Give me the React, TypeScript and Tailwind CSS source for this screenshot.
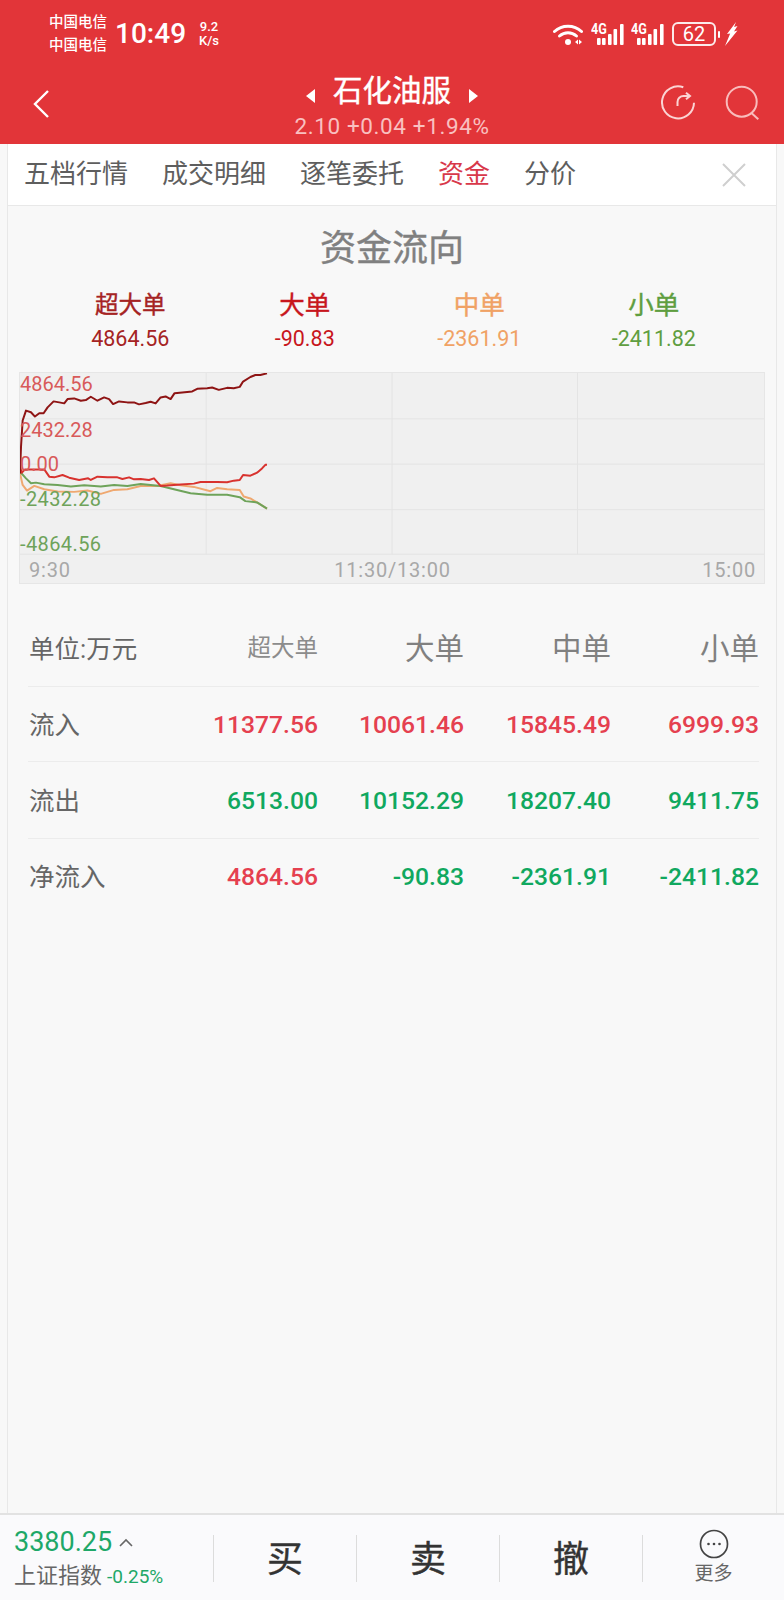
import React from 'react';

const FONT = 'font-["Roboto","Noto_Sans_CJK_SC",sans-serif]';
const SEMI = '[-webkit-text-stroke:0.4px_currentColor]';

const legend = [
  { name: '超大单', value: '4864.56', color: 'text-[#a52323]', size: 'text-[23.5px]' },
  { name: '大单', value: '-90.83', color: 'text-[#c8161d]', size: 'text-[25.5px]' },
  { name: '中单', value: '-2361.91', color: 'text-[#f0a265]', size: 'text-[25.5px]' },
  { name: '小单', value: '-2411.82', color: 'text-[#5f9e40]', size: 'text-[25.5px]' },
];

const rows = [
  { label: '流入', height: 'h-[75px]', cells: ['11377.56', '10061.46', '15845.49', '6999.93'], colors: ['r', 'r', 'r', 'r'] },
  { label: '流出', height: 'h-[77px]', cells: ['6513.00', '10152.29', '18207.40', '9411.75'], colors: ['g', 'g', 'g', 'g'] },
  { label: '净流入', height: 'h-[74px]', cells: ['4864.56', '-90.83', '-2361.91', '-2411.82'], colors: ['r', 'g', 'g', 'g'] },
];

const darkRed = '57,340 60,260 65,180 75,150 90,155 102,168 115,158 128,158 140,140 158,122 175,125 190,128 200,115 220,113 240,120 255,118 270,108 290,120 310,110 325,115 337,130 355,122 380,125 400,125 415,131 435,127 450,123 465,128 480,110 495,107 510,115 522,97 545,95 575,92 590,84 620,82 635,80 655,87 680,81 700,82 718,78 728,62 750,48 765,42 780,42 800,37';
const red = '57,320 62,338 72,328 130,328 145,350 160,352 185,345 205,353 235,360 262,355 270,360 290,350 320,352 350,352 365,357 385,352 400,358 420,357 445,360 460,355 480,378 500,377 540,374 580,371 600,366 650,366 680,367 700,362 718,360 728,345 750,347 770,338 785,325 795,314 800,314';
const orange = '57,340 65,375 78,392 100,378 130,388 170,395 220,396 260,392 300,402 340,390 380,388 420,378 470,378 510,370 540,376 580,381 630,394 650,384 680,388 718,390 730,410 750,416 770,428 800,447';
const green = '57,335 75,355 90,370 105,368 130,373 170,375 210,380 250,376 300,380 340,375 380,378 420,372 480,378 520,388 570,400 620,405 680,405 718,412 735,424 770,428 800,447';

const Signal = () => (
  <div className="relative w-[33px] h-[23px]">
    <span className="absolute left-0 top-[-1px] text-[14px] leading-[14px] font-bold text-white scale-x-90 origin-left">4G</span>
    <svg width="33" height="23" viewBox="0 0 33 23" fill="#fff">
      <rect x="6" y="15" width="3.6" height="7" rx="1" />
      <rect x="11" y="15" width="3.6" height="7" rx="1" />
      <rect x="17" y="11" width="3.6" height="11" rx="1" />
      <rect x="22.5" y="6" width="3.6" height="16" rx="1" />
      <rect x="29" y="1" width="3.6" height="21" rx="1" />
    </svg>
  </div>
);

const StatusBar = () => (
  <div className="h-[68px] flex items-center pl-[49px] pr-[46px] text-white">
    <div className="flex flex-col text-[14.5px] leading-[23px] font-medium w-[66px]">
      <span>中国电信</span>
      <span>中国电信</span>
    </div>
    <span className="text-[28px] leading-none font-medium">10:49</span>
    <div className="ml-[13px] flex flex-col items-center text-[13px] leading-[14px] font-medium">
      <span>9.2</span>
      <span>K/s</span>
    </div>
    <div className="ml-auto flex items-center">
      <svg width="30" height="23" viewBox="0 0 30 23" fill="none" stroke="#fff" strokeWidth="3" strokeLinecap="round">
        <path d="M1.5 8.5C9 1.5 21 1.5 28.5 8.5" />
        <path d="M6.5 13C11.5 8.5 18.5 8.5 23.5 13" />
        <circle cx="15" cy="19" r="3" fill="#fff" stroke="none" />
        <path d="M22 19l3-2.5v5zM26 16.5l3 2.5-3 2.5z" fill="#fff" stroke="none" />
      </svg>
      <div className="ml-[8px]"><Signal /></div>
      <div className="ml-[7px]"><Signal /></div>
      <div className="ml-[8px] w-[44px] h-[24px] border-2 border-white/90 rounded-[6px] flex items-center justify-center text-[20px] leading-none">62</div>
      <div className="ml-[2px] w-[2px] h-[7px] bg-white rounded-full" />
      <svg className="ml-[5px]" width="13" height="24" viewBox="0 0 13 24" fill="#fff">
        <path d="M11 0L2 12l3.2-.6L0 24 12.5 8.5 9 9.5l3.5-5.5-3.4 1z" />
      </svg>
    </div>
  </div>
);

const NavBar = () => (
  <div className="relative h-[76px] text-white">
    <svg className="absolute left-[32px] top-[21px]" width="18" height="30" viewBox="0 0 18 30" fill="none" stroke="#fff" strokeWidth="2.4">
      <path d="M16 2L3 15l13 13" />
    </svg>
    <div className="flex flex-col items-center">
      <div className="flex items-center h-[48px]">
        <span className="w-0 h-0 mt-[8px] border-y-[7px] border-y-transparent border-r-[9px] border-r-white" />
        <span className={`mx-[18px] text-[29.5px] leading-none ${SEMI}`}>石化油服</span>
        <span className="w-0 h-0 mt-[8px] border-y-[7px] border-y-transparent border-l-[9px] border-l-white" />
      </div>
      <span className="text-[22.5px] leading-[20px] tracking-[0.6px] text-[#f9c0c0]">2.10 +0.04 +1.94%</span>
    </div>
    <svg className="absolute left-[660px] top-[17px]" width="36" height="36" viewBox="0 0 36 36" fill="none" stroke="#fbd4d4" strokeWidth="2">
      <path d="M23.3 2.3A16 16 0 1 0 34 17.7" />
      <path d="M17.5 21v-4a6 6 0 0 1 6-6h6" />
      <path d="M26 7.7l4 3.3-4 3.3" />
    </svg>
    <svg className="absolute left-[725px] top-[17px]" width="36" height="36" viewBox="0 0 36 36" fill="none" stroke="#f9bcbc" strokeWidth="2">
      <circle cx="16.7" cy="16.7" r="15" />
      <path d="M26.7 28.3l6.6 6" />
    </svg>
  </div>
);

const Tabs = () => (
  <div className="h-[62px] bg-white border-b border-[#e8e8e8] flex items-center pl-[16px] pr-[30px] text-[26px] text-[#5e5e5e] gap-[34px]">
    <span>五档行情</span>
    <span>成交明细</span>
    <span>逐笔委托</span>
    <span className="text-[#d8384a]">资金</span>
    <span>分价</span>
    <svg className="ml-auto" width="24" height="24" viewBox="0 0 24 24" stroke="#cfcfcf" strokeWidth="2">
      <path d="M1 1l22 22M23 1L1 23" />
    </svg>
  </div>
);

const Chart = () => (
  <div className="relative mx-[11px] h-[212px] bg-[#f0f0f0] border border-[#e6e6e6]">
    <svg className="absolute inset-0 w-full h-full" viewBox="57 36 2238 636" preserveAspectRatio="none" fill="none">
      <g stroke="#e4e4e4" strokeWidth="3">
        <path d="M57 175H2295M57 312H2295M57 450H2295M57 585H2295" />
        <path d="M617 36V585M1176 36V585M1734 36V585" />
      </g>
      <g strokeWidth="6" strokeLinejoin="round">
        <polyline points={orange} stroke="#efa870" />
        <polyline points={green} stroke="#6ea35a" />
        <polyline points={red} stroke="#d8322e" />
        <polyline points={darkRed} stroke="#8e1414" />
      </g>
    </svg>
    <span className="absolute left-0 top-[-1px] text-[20px] leading-[24px] text-[#d85a5a]">4864.56</span>
    <span className="absolute left-0 top-[45px] text-[20px] leading-[24px] text-[#d85a5a]">2432.28</span>
    <span className="absolute left-0 top-[79px] text-[20px] leading-[24px] text-[#d85a5a]">0.00</span>
    <span className="absolute left-0 top-[114px] text-[20px] leading-[24px] tracking-[0.4px] text-[#6ea35a]">-2432.28</span>
    <span className="absolute left-0 top-[159px] text-[20px] leading-[24px] tracking-[0.4px] text-[#6ea35a]">-4864.56</span>
    <div className="absolute left-[9px] right-[8px] bottom-0 h-[28px] grid grid-cols-3 items-center text-[20px] tracking-[0.8px] text-[#a8a8a8]">
      <span>9:30</span>
      <span className="text-center">11:30/13:00</span>
      <span className="text-right">15:00</span>
    </div>
  </div>
);

const Table = () => (
  <div className="mt-[24px] ml-[20px] w-[731px]">
    <div className="h-[79px] grid grid-cols-[1fr_146px_146px_147px_148px] items-center border-b border-[#ececec] text-[#808080] text-right pt-[4px]">
      <span className="text-left pl-[1px] text-[25.5px] text-[#666666] whitespace-nowrap">单位:万元</span>
      <span className="text-[23.5px] text-[#8c8c8c]">超大单</span>
      <span className="text-[29.5px]">大单</span>
      <span className="text-[29.5px]">中单</span>
      <span className="text-[29.5px]">小单</span>
    </div>
    {rows.map((row, i) => (
      <div key={row.label} className={`${row.height} pt-[2px] grid grid-cols-[1fr_146px_146px_147px_148px] items-center text-right ${i < 2 ? 'border-b border-[#ececec]' : ''}`}>
        <span className="text-left pl-[1px] text-[25.5px] text-[#666666]">{row.label}</span>
        {row.cells.map((cell, j) => (
          <span key={j} className={`text-[24.7px] font-medium ${row.colors[j] === 'r' ? 'text-[#e5404f]' : 'text-[#10a85f]'}`}>{cell}</span>
        ))}
      </div>
    ))}
  </div>
);

const BottomBar = () => (
  <div className="h-[87px] shrink-0 bg-[#fafafc] border-t-2 border-[#e2e2e2] flex items-center pt-[2px]">
    <div className="w-[213px] pl-[14px] flex flex-col">
      <div className="flex items-center">
        <span className="text-[27px] leading-[30px] text-[#1ea868]">3380.25</span>
        <svg className="ml-[7px]" width="14" height="9" viewBox="0 0 14 9" fill="none" stroke="#666" strokeWidth="1.6">
          <path d="M1 8l6-6 6 6" />
        </svg>
      </div>
      <div className="flex items-baseline mt-[6px]">
        <span className="text-[22px] leading-[26px] text-[#666666]">上证指数</span>
        <span className="ml-[5px] text-[19px] leading-[26px] text-[#1ea868]">-0.25%</span>
      </div>
    </div>
    {['买', '卖', '撤'].map((t) => (
      <div key={t} className={`w-[143px] h-[47px] border-l border-[#dcdcdc] flex items-center justify-center text-[36px] leading-none text-[#333333] pt-[2px] ${SEMI}`}>{t}</div>
    ))}
    <div className="flex-1 h-[47px] border-l border-[#dcdcdc] flex flex-col items-center justify-center">
      <svg className="shrink-0 mt-[-4px]" width="30" height="30" viewBox="0 0 30 30" fill="none">
        <circle cx="15" cy="15" r="13.5" stroke="#444" strokeWidth="1.7" />
        <circle cx="9.5" cy="15" r="1.3" fill="#444" />
        <circle cx="15" cy="15" r="1.3" fill="#444" />
        <circle cx="20.5" cy="15" r="1.3" fill="#444" />
      </svg>
      <span className="shrink-0 mt-[4px] text-[19px] leading-[22px] text-[#666666]">更多</span>
    </div>
  </div>
);

export default function App() {
  return (
    <div className={`w-[784px] h-[1600px] flex flex-col bg-[#f8f8f8] overflow-hidden ${FONT}`}>
      <div className="h-[144px] shrink-0 bg-[#e23539]">
        <StatusBar />
        <NavBar />
      </div>
      <div className="flex-1 mx-[7px] border-x border-[#e8e8e8]">
        <Tabs />
        <h1 className={`mt-[22px] h-[42px] text-center text-[36px] leading-[42px] font-normal text-[#808080] ${SEMI}`}>资金流向</h1>
        <div className="mt-[20px] mx-[35px] grid grid-cols-4 text-center">
          {legend.map((item) => (
            <div key={item.name} className={`flex flex-col ${item.color}`}>
              <span className={`${item.size} leading-[30px] ${SEMI}`}>{item.name}</span>
              <span className="mt-[7px] text-[21.5px] leading-[24px]">{item.value}</span>
            </div>
          ))}
        </div>
        <div className="mt-[21px]">
          <Chart />
        </div>
        <Table />
      </div>
      <BottomBar />
    </div>
  );
}
